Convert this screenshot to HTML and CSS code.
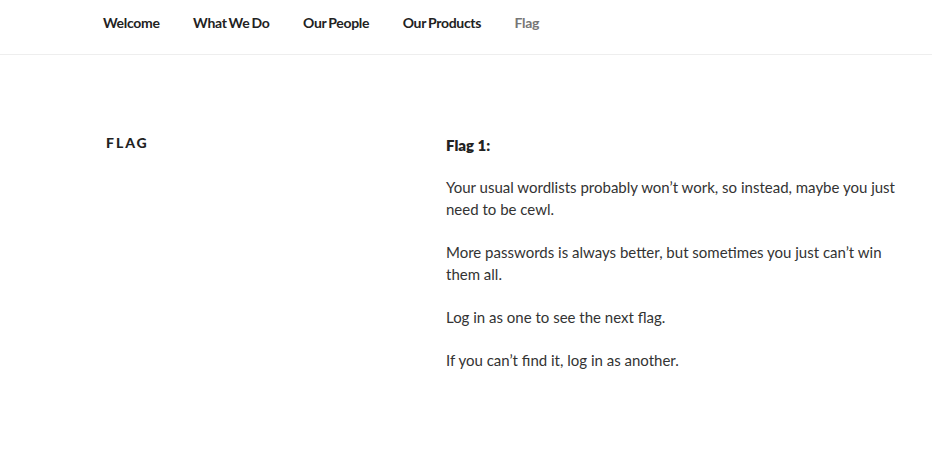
FILE: index.html
```html
<!DOCTYPE html>
<html lang="en">
<head>
<meta charset="utf-8">
<title>Flag</title>
<link rel="stylesheet" href="styles.css">
</head>
<body>
<header class="site-nav">
  <nav class="menu">
    <a class="menu-item" href="#">Welcome</a>
    <a class="menu-item" href="#">What We Do</a>
    <a class="menu-item" href="#">Our People</a>
    <a class="menu-item" href="#">Our Products</a>
    <a class="menu-item current" href="#">Flag</a>
  </nav>
</header>
<main class="content">
  <h1 class="page-title">Flag</h1>
  <div class="entry">
    <p class="lead"><strong>Flag 1:</strong></p>
    <p>Your usual wordlists probably won’t work, so instead, maybe you just need to be cewl.</p>
    <p>More passwords is always better, but sometimes you just can’t win them all.</p>
    <p>Log in as one to see the next flag.</p>
    <p>If you can’t find it, log in as another.</p>
  </div>
</main>
</body>
</html>
```
FILE: styles.css
```css
html, body {
  margin: 0;
  padding: 0;
  background: #fff;
}
body {
  font-family: Lato, "Liberation Sans", sans-serif;
  color: #333;
  font-size: 15px;
}
.site-nav {
  height: 54px;
  border-bottom: 1px solid #eee;
  display: flex;
  align-items: center;
}
.menu {
  display: flex;
  gap: 33.5px;
  padding-left: 103px;
  margin-top: -10px;
}
.menu-item {
  font-size: 14px;
  font-weight: 700;
  letter-spacing: -0.3px;
  word-spacing: -1px;
  color: #222;
  text-decoration: none;
}
.menu-item.current {
  color: #767676;
}
.content {
  display: grid;
  grid-template-columns: 340px 1fr;
  padding: 77px 30px 0 106px;
}
.page-title {
  margin: 0;
  padding-top: 1px;
  font-size: 14px;
  font-weight: 900;
  letter-spacing: 0.14em;
  text-transform: uppercase;
  color: #222;
  line-height: 20px;
}
.entry {
  padding-top: 2px;
}
.entry p {
  margin: 0 0 21px;
  line-height: 22px;
}
.entry .lead {
  margin-bottom: 20px;
}
.entry strong {
  color: #222;
  font-weight: 800;
}
```
